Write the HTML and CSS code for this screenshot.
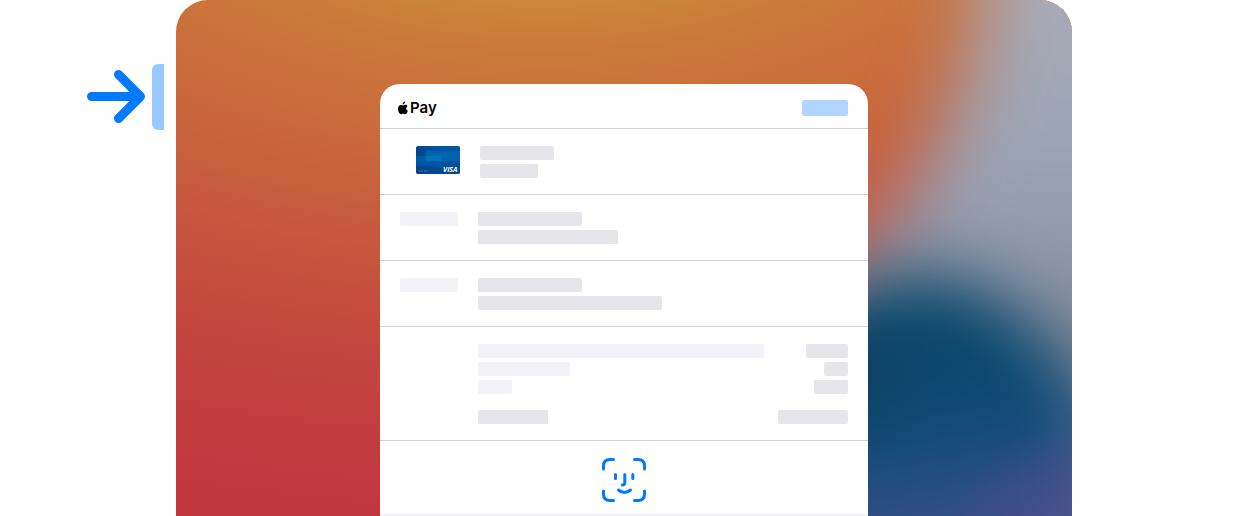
FILE: index.html
```html
<!DOCTYPE html>
<html lang="en">
<head>
<meta charset="utf-8">
<meta name="viewport" content="width=device-width, initial-scale=1">
<title>Apple Pay</title>
<link rel="stylesheet" href="styles.css">
</head>
<body>
<main class="stage">
  <div class="hint">
    <svg class="hint-arrow" viewBox="0 0 60 60" aria-hidden="true"><path d="M5.500 29.500H52.500M32.500 7.500L54.500 29.500L32.500 51.500"/></svg>
    <span class="hint-button"></span>
  </div>
  <section class="screen">
    <svg class="wallpaper" viewBox="0 0 896 516" preserveAspectRatio="none" aria-hidden="true">
      <defs>
        <radialGradient id="warm" gradientUnits="userSpaceOnUse" cx="0" cy="0" r="1" gradientTransform="translate(370 -200) scale(1300 740)">
          <stop offset=".27" stop-color="#cd873b"/>
          <stop offset=".33" stop-color="#cb7b3a"/>
          <stop offset=".39" stop-color="#ca733b"/>
          <stop offset=".46" stop-color="#ca6b3c"/>
          <stop offset=".53" stop-color="#c8623d"/>
          <stop offset=".62" stop-color="#c7563e"/>
          <stop offset=".72" stop-color="#c44a3e"/>
          <stop offset=".85" stop-color="#c23e40"/>
          <stop offset="1" stop-color="#c1353d"/>
        </radialGradient>
        <linearGradient id="grey" gradientUnits="userSpaceOnUse" x1="0" y1="0" x2="0" y2="360">
          <stop offset="0" stop-color="#a8abb6"/>
          <stop offset=".4" stop-color="#9ca5b5"/>
          <stop offset=".65" stop-color="#929bad"/>
          <stop offset="1" stop-color="#7f8699"/>
        </linearGradient>
        <linearGradient id="blue" gradientUnits="userSpaceOnUse" x1="720" y1="350" x2="755" y2="535">
          <stop offset="0" stop-color="#08466a"/>
          <stop offset=".3" stop-color="#094a72"/>
          <stop offset=".55" stop-color="#184c7c"/>
          <stop offset="1" stop-color="#384f88"/>
        </linearGradient>
        <radialGradient id="violet" gradientUnits="userSpaceOnUse" cx="910" cy="570" r="150">
          <stop offset="0" stop-color="#514e90"/>
          <stop offset="1" stop-color="#514e90" stop-opacity="0"/>
        </radialGradient>
        <radialGradient id="shade" gradientUnits="userSpaceOnUse" cx="670" cy="380" r="90">
          <stop offset="0" stop-color="#173a58"/>
          <stop offset="1" stop-color="#173a58" stop-opacity="0"/>
        </radialGradient>
        <filter id="soft" filterUnits="userSpaceOnUse" x="300" y="-400" width="1100" height="1300" color-interpolation-filters="sRGB"><feGaussianBlur stdDeviation="38"/></filter>
        <filter id="softer" filterUnits="userSpaceOnUse" x="300" y="-400" width="1100" height="1300" color-interpolation-filters="sRGB"><feGaussianBlur stdDeviation="34"/></filter>
      </defs>
      <rect width="896" height="516" fill="url(#warm)"/>
      <path d="M820-300L805 0Q790 100 742 175Q705 240 635 300V800H1250V-300Z" fill="url(#grey)" filter="url(#soft)"/>
      <path d="M450 380Q620 320 690 290Q750 262 810 294Q880 335 925 420V800H450Z" fill="url(#blue)" filter="url(#softer)"/>
      <rect x="580" y="290" width="180" height="180" fill="url(#shade)" opacity=".5"/>
      <rect x="740" y="400" width="156" height="116" fill="url(#violet)"/>
    </svg>
    <article class="sheet">
      <header class="sheet-header">
        <h1 class="brand">
          <svg class="apple" viewBox="0 0 20 26" aria-hidden="true"><path d="M14 0C14.300 2 13.500 3.500 12.500 4.600C11.500 5.700 10.200 6.200 9.200 6.100C9 4.300 9.800 2.800 10.700 1.800C11.600.8 12.900.1 14 0ZM18.900 9.300C15.300 11.700 15.800 16.700 19.800 18.300C18.700 21.600 16.600 25.600 14.300 25.600C12.700 25.600 12.200 24.700 10.300 24.700C8.400 24.700 7.700 25.600 6.300 25.600C3.400 25.600 0 19.700 0 14.600C0 9.700 3 6.800 6.200 6.800C8.200 6.800 9.500 7.900 10.600 7.900C11.700 7.900 13 6.700 15.300 6.700C16.800 6.700 18.200 7.700 18.900 9.300Z"/></svg>
          <span>Pay</span>
        </h1>
        <span class="bar action"></span>
      </header>
      <div class="row payment">
        <svg class="card" viewBox="0 0 44 28" role="img" aria-label="Visa card">
          <defs>
            <linearGradient id="card-face" x1="0" y1="0" x2="1" y2="0"><stop stop-color="#044489"/><stop offset=".5" stop-color="#0053a3"/><stop offset="1" stop-color="#00569f"/></linearGradient>
            <linearGradient id="card-shade" x1="0" y1="0" x2="0" y2="1"><stop offset=".5" stop-color="#064287" stop-opacity="0"/><stop offset="1" stop-color="#064287" stop-opacity=".8"/></linearGradient>
          </defs>
          <rect width="44" height="28" rx="2" fill="url(#card-face)"/>
          <rect y="10" width="25" height="10" fill="#0064b4" opacity=".65"/>
          <rect x="10" y="5" width="34" height="10" fill="#0068b4" opacity=".75"/>
          <rect x="10" y="10" width="15" height="5" fill="#0075bb" opacity=".8"/>
          <rect width="44" height="28" rx="2" fill="url(#card-shade)"/>
          <path d="M3 25H7M8 25H12" stroke="#7fa7d1" stroke-width="1" stroke-dasharray="1 .4" opacity=".6"/>
          <text class="visa" x="27" y="26">VISA</text>
        </svg>
        <div class="lines"><span class="bar w74"></span><span class="bar w58"></span></div>
      </div>
      <div class="row">
        <span class="bar pale w58"></span>
        <div class="lines"><span class="bar w104"></span><span class="bar w140"></span></div>
      </div>
      <div class="row">
        <span class="bar pale w58"></span>
        <div class="lines"><span class="bar w104"></span><span class="bar w184"></span></div>
      </div>
      <div class="row summary">
        <div class="lines">
          <div class="line"><span class="bar pale w286"></span><span class="bar w42"></span></div>
          <div class="line"><span class="bar pale w92"></span><span class="bar w24"></span></div>
          <div class="line"><span class="bar pale w34"></span><span class="bar w34"></span></div>
          <div class="line total"><span class="bar w70"></span><span class="bar w70"></span></div>
        </div>
      </div>
      <div class="confirm">
        <svg class="face-id" viewBox="0 0 44 44" role="img" aria-label="Face ID"><path d="M1.500 11V8Q1.500 1.500 8 1.500H11.500M32.500 1.500H36Q42.500 1.500 42.500 8V11M42.500 33V36Q42.500 42.500 36 42.500H32.500M11.500 42.500H8Q1.500 42.500 1.500 36V33M13.500 16.500V20.500M30.800 16.500V20.500M22.800 16.500V24.500Q22.800 27 20.300 27M16.500 32Q22.500 37 28.500 32"/></svg>
      </div>
      <footer class="sheet-footer"></footer>
    </article>
  </section>
</main>
</body>
</html>
```
FILE: styles.css
```css
* {
  box-sizing: border-box;
}

body {
  margin: 0;
  background: #fff;
  font-family: Inter, "Liberation Sans", sans-serif;
}

.stage {
  display: grid;
  grid-template-columns: 176px minmax(0, 1fr) 176px;
  min-height: 100vh;
}

.hint {
  display: flex;
  align-items: center;
  align-self: start;
  justify-content: flex-end;
  gap: 6px;
  padding: 64px 12px 0 0;
}

.hint-arrow {
  width: 60px;
  height: 60px;
  fill: none;
  stroke: #007aff;
  stroke-width: 9;
  stroke-linecap: round;
  stroke-linejoin: round;
}

.hint-button {
  width: 12px;
  height: 66px;
  border-radius: 6px 0 0 6px;
  background: #99caff;
}

.screen {
  position: relative;
  display: flex;
  justify-content: center;
  padding-top: 84px;
  overflow: hidden;
  border-radius: 32px 32px 0 0;
}

.wallpaper {
  position: absolute;
  inset: 0;
  width: 100%;
  height: 100%;
}

.sheet {
  position: relative;
  display: flex;
  flex-direction: column;
  width: 100%;
  max-width: 488px;
  overflow: hidden;
  border-radius: 20px 20px 0 0;
  background: #fff;
}

.sheet-header {
  display: flex;
  align-items: center;
  justify-content: space-between;
  height: 45px;
  padding: 4px 20px 0 18px;
  border-bottom: 1px solid #d1d1d6;
}

.brand {
  display: flex;
  align-items: center;
  gap: 2px;
  margin: 0;
  font-size: 15px;
  font-weight: 600;
  line-height: 20px;
}

.apple {
  width: 10px;
  height: 14px;
}

.bar {
  flex: none;
  height: 14px;
  border-radius: 2px;
  background: #e5e5ea;
}

.pale {
  background: #f2f2f7;
}

.action {
  width: 46px;
  height: 16px;
  background: #b0d6ff;
}

.row {
  display: flex;
  gap: 20px;
  padding: 17px 20px 16px;
  border-bottom: 1px solid #d1d1d6;
}

.payment {
  padding-left: 36px;
}

.card {
  width: 44px;
  height: 28px;
}

.visa {
  fill: #fff;
  font: italic 700 7px "Open Sans", sans-serif;
}

.lines {
  display: flex;
  flex: 1;
  flex-direction: column;
  gap: 4px;
}

.summary {
  padding-left: 98px;
}

.line {
  display: flex;
  justify-content: space-between;
}

.total {
  margin-top: 12px;
}

.confirm {
  display: flex;
  justify-content: center;
  padding: 17px 0 12px;
}

.face-id {
  width: 44px;
  height: 44px;
  fill: none;
  stroke: #007aff;
  stroke-width: 3;
  stroke-linecap: round;
  stroke-linejoin: round;
}

.sheet-footer {
  flex: 1;
  min-height: 2px;
  background: #f2f2f7;
}

.w24 { width: 24px; }
.w34 { width: 34px; }
.w42 { width: 42px; }
.w58 { width: 58px; }
.w70 { width: 70px; }
.w74 { width: 74px; }
.w92 { width: 92px; }
.w104 { width: 104px; }
.w140 { width: 140px; }
.w184 { width: 184px; }
.w286 { width: 286px; }
```
